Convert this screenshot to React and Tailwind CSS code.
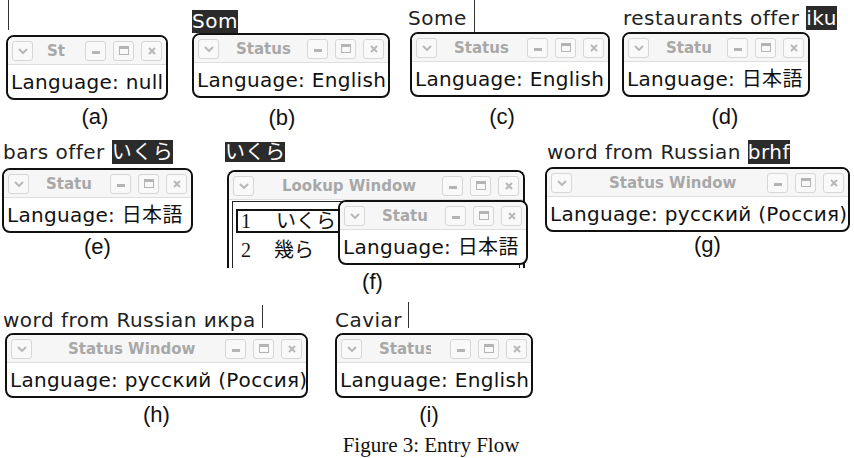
import React from 'react';

function Btn({ children }) {
    return (
        <div className="flex h-[20px] w-[21px] flex-none items-center justify-center rounded-[3px] border border-[#d6d6d6] bg-[#f9f9f9]">
            {children}
        </div>
    );
}

function Chevron() {
    return (
        <svg width="10" height="6" viewBox="0 0 10 6">
            <path d="M1 1l4 4 4-4" stroke="#b8b8b8" strokeWidth="2" fill="none" />
        </svg>
    );
}

function TitleBar({ title, titleMl = 'ml-[17px]', titleW = '' }) {
    return (
        <div className="flex h-[28px] items-center border-b border-[#dedede] bg-[#f6f6f6] px-[4px]">
            <Btn>
                <Chevron />
            </Btn>
            <div className={`flex-none overflow-hidden whitespace-nowrap text-[15px] font-bold leading-[20px] text-[#a8a8a8] ${titleMl} ${titleW}`}>
                {title}
            </div>
            <div className="ml-auto flex gap-[7px]">
                <Btn>
                    <div className="mt-[4px] h-[3px] w-[8px] bg-[#b4b4b4]" />
                </Btn>
                <Btn>
                    <div className="h-[9px] w-[10px] border border-t-[3px] border-[#b4b4b4]" />
                </Btn>
                <Btn>
                    <svg width="8" height="8" viewBox="0 0 8 8">
                        <path d="M1 1l6 6M7 1l-6 6" stroke="#b8b8b8" strokeWidth="2" />
                    </svg>
                </Btn>
            </div>
        </div>
    );
}

function StatusWin({ width, title, titleMl, titleW, lang }) {
    return (
        <div className={`overflow-hidden rounded-[8px] border-2 border-[#111] bg-white ${width}`}>
            <TitleBar title={title} titleMl={titleMl} titleW={titleW} />
            <div className="flex h-[33px] items-center whitespace-nowrap px-[3px] text-[20px] leading-[24px] tracking-[0.3px] text-[#111]">
                Language: {lang}
            </div>
        </div>
    );
}

function Cursor({ h }) {
    return <span className={`inline-block w-px bg-[#333] ${h}`} />;
}

function Hi({ children }) {
    return <span className="bg-[#2b2b2b] text-white">{children}</span>;
}

function Label({ children, className = '' }) {
    return (
        <div className={`text-center font-['Liberation_Sans',sans-serif] text-[22px] leading-[24px] text-[#111] ${className}`}>
            {children}
        </div>
    );
}

export default function App() {
    return (
        <div className="h-[458px] w-[854px] overflow-hidden bg-white font-['DejaVu_Sans','Noto_Sans_CJK_JP',sans-serif]">
            {/* row 1 */}
            <div className="flex h-[135px] items-start">
                <div className="ml-[6px] flex w-[162px] flex-none flex-col">
                    <div className="h-[35px] pl-[2px]">
                        <Cursor h="h-[30px]" />
                    </div>
                    <StatusWin width="w-[162px]" title="St" titleMl="ml-[14px]" lang="null" />
                    <Label className="mt-[5px] pl-[16px]">(a)</Label>
                </div>
                <div className="ml-[24px] flex w-[198px] flex-none flex-col">
                    <div className="flex h-[33px] items-end whitespace-nowrap text-[20px] leading-[23px] tracking-[0.5px] text-[#222]">
                        <Hi>Som</Hi>
                    </div>
                    <StatusWin width="w-[198px]" title="Status" lang="English" />
                    <Label className="mt-[8px] pr-[18px]">(b)</Label>
                </div>
                <div className="ml-[20px] flex w-[200px] flex-none flex-col">
                    <div className="-ml-[2px] flex h-[32px] items-end whitespace-nowrap text-[20px] leading-[23px] tracking-[0.5px] text-[#222]">
                        <span className="mb-[2px]">Some</span>
                        <span className="ml-[7px] self-start">
                            <Cursor h="h-[32px]" />
                        </span>
                    </div>
                    <StatusWin width="w-[200px]" title="Status" lang="English" />
                    <Label className="mt-[8px] pr-[16px]">(c)</Label>
                </div>
                <div className="ml-[12px] flex w-[188px] flex-none flex-col">
                    <div className="ml-[1px] flex h-[32px] items-end whitespace-nowrap pb-[3px] text-[20px] leading-[22px] tracking-[0.5px] text-[#222]">
                        <span>
                            restaurants offer <Hi>iku</Hi>
                        </span>
                    </div>
                    <StatusWin width="w-[188px]" title="Statu" lang="日本語" />
                    <Label className="mt-[8px] pl-[18px]">(d)</Label>
                </div>
            </div>

            {/* row 2 */}
            <div className="flex h-[165px] items-start">
                <div className="ml-[2px] flex w-[191px] flex-none flex-col">
                    <div className="ml-[1px] flex h-[33px] items-end whitespace-nowrap pb-[5px] text-[20px] leading-[21px] tracking-[0.5px] text-[#222]">
                        <span>
                            bars offer <Hi>いくら</Hi>
                        </span>
                    </div>
                    <StatusWin width="w-[191px]" title="Statu" lang="日本語" />
                    <Label className="mt-[2px]">(e)</Label>
                </div>
                <div className="ml-[32px] flex w-[303px] flex-none flex-col">
                    <div className="flex h-[35px] items-end whitespace-nowrap pb-[8px] text-[20px] leading-[20px] text-[#222]">
                        <Hi>いくら</Hi>
                    </div>
                    <div className="relative ml-[2px] h-[98px] w-[298px]">
                        <div className="h-[98px] overflow-hidden rounded-t-[8px] border-2 border-b-0 border-[#111] bg-white">
                            <TitleBar title="Lookup Window" titleMl="ml-[28px]" titleW="w-[146px]" />
                            <div className="mx-[3px] mt-[1px] h-full border border-b-0 border-[#222] px-[3px] pt-[7px] font-['Liberation_Serif','Noto_Sans_CJK_JP',serif] text-[20px] leading-none text-[#111]">
                                <div className="flex h-[24px] items-center border-2 border-[#111]">
                                    <span className="w-[38px] pl-[3px]">1</span>
                                    <span>いくら</span>
                                </div>
                                <div className="mt-[7px] flex h-[20px] items-center">
                                    <span className="w-[38px] pl-[5px]">2</span>
                                    <span>幾ら</span>
                                </div>
                            </div>
                        </div>
                        <div className="absolute left-[111px] top-[30px]">
                            <StatusWin width="w-[190px]" title="Statu" lang="日本語" />
                        </div>
                    </div>
                    <Label className="mt-[2px] pr-[8px]">(f)</Label>
                </div>
                <div className="ml-[17px] flex w-[305px] flex-none flex-col">
                    <div className="ml-[2px] flex h-[32px] items-end whitespace-nowrap pb-[4px] text-[20px] leading-[21px] tracking-[0.5px] text-[#222]">
                        <span>
                            word from Russian <Hi>brhf</Hi>
                        </span>
                    </div>
                    <StatusWin width="w-[305px]" title="Status Window" titleMl="ml-[37px]" lang="русский (Россия)" />
                    <Label className="mt-[1px] pl-[20px]">(g)</Label>
                </div>
            </div>

            {/* row 3 */}
            <div className="flex items-start">
                <div className="ml-[5px] flex w-[303px] flex-none flex-col">
                    <div className="-ml-[2px] flex h-[33px] items-end whitespace-nowrap text-[20px] leading-[23px] tracking-[0.5px] text-[#222]">
                        <span className="mb-[1px]">word from Russian икра</span>
                        <span className="ml-[6px]">
                            <Cursor h="h-[23px]" />
                        </span>
                    </div>
                    <StatusWin width="w-[303px]" title="Status Window" titleMl="ml-[36px]" lang="русский (Россия)" />
                    <Label className="mt-[5px]">(h)</Label>
                </div>
                <div className="ml-[27px] flex w-[198px] flex-none flex-col">
                    <div className="flex h-[33px] items-end whitespace-nowrap text-[20px] leading-[23px] tracking-[0.5px] text-[#222]">
                        <span className="mb-[1px]">Caviar</span>
                        <span className="ml-[6px]">
                            <Cursor h="h-[26px]" />
                        </span>
                    </div>
                    <StatusWin width="w-[198px]" title="Status" titleW="w-[52px]" lang="English" />
                    <Label className="mt-[5px] pr-[10px]">(i)</Label>
                </div>
            </div>
            <div className="mt-[6px] pl-[8px] text-center font-['Liberation_Serif',serif] text-[21px] leading-[24px] text-[#111]">
                Figure 3: Entry Flow
            </div>
        </div>
    );
}
